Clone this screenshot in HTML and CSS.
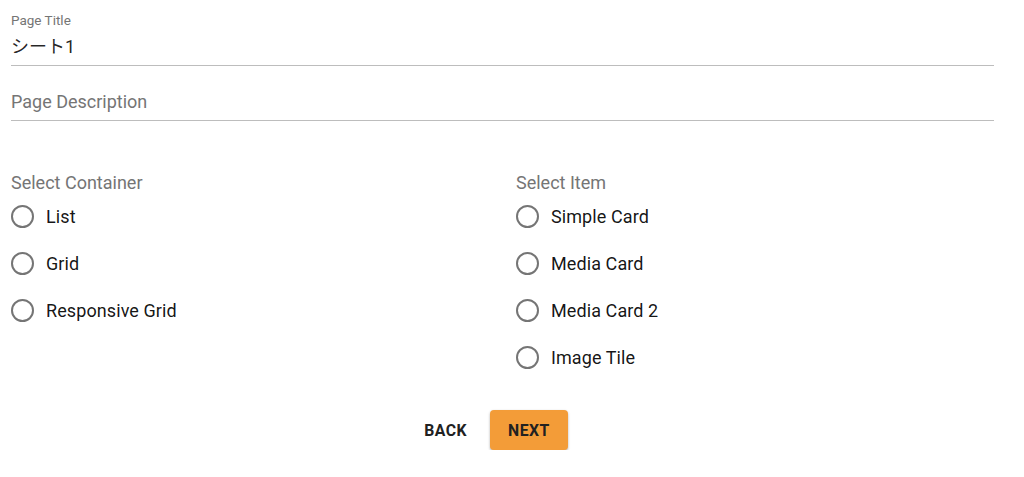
FILE: index.html
```html
<!DOCTYPE html>
<html lang="ja">
<head>
<meta charset="utf-8">
<title>Page</title>
<link rel="stylesheet" href="styles.css">
</head>
<body>
<div class="page">
  <div class="field">
    <div class="field-label">Page Title</div>
    <div class="field-input">シート1</div>
  </div>
  <div class="field field-empty">
    <div class="field-input placeholder">Page Description</div>
  </div>

  <div class="selects">
    <div class="group">
      <div class="group-label">Select Container</div>
      <div class="radio-row"><span class="radio"></span><span class="radio-text">List</span></div>
      <div class="radio-row"><span class="radio"></span><span class="radio-text">Grid</span></div>
      <div class="radio-row"><span class="radio"></span><span class="radio-text">Responsive Grid</span></div>
    </div>
    <div class="group">
      <div class="group-label">Select Item</div>
      <div class="radio-row"><span class="radio"></span><span class="radio-text">Simple Card</span></div>
      <div class="radio-row"><span class="radio"></span><span class="radio-text">Media Card</span></div>
      <div class="radio-row"><span class="radio"></span><span class="radio-text">Media Card 2</span></div>
      <div class="radio-row"><span class="radio"></span><span class="radio-text">Image Tile</span></div>
    </div>
  </div>

  <div class="actions">
    <button class="btn btn-text">BACK</button>
    <button class="btn btn-primary">NEXT</button>
  </div>
</div>
</body>
</html>
```

FILE: styles.css
```css
* { box-sizing: border-box; }
html, body {
  margin: 0;
  padding: 0;
  background: #fff;
}
body {
  font-family: Roboto, "Noto Sans CJK JP", "Liberation Sans", sans-serif;
  color: rgba(0, 0, 0, 0.87);
}
.page {
  padding: 12px 30px 0 11px;
}
.field {
  border-bottom: 1px solid #bdbdbd;
  padding-bottom: 8px;
}
.field-label {
  font-size: 13.5px;
  line-height: 16px;
  color: #757575;
}
.field-input {
  margin-top: 8px;
  font-size: 18px;
  line-height: 21px;
  color: rgba(0, 0, 0, 0.87);
}
.field-empty {
  margin-top: 25px;
}
.field-empty .field-input {
  margin-top: 0;
}
.placeholder {
  color: #757575;
}
.selects {
  margin-top: 52px;
  display: grid;
  grid-template-columns: 1fr 1fr;
  column-gap: 27px;
}
.group-label {
  font-size: 18px;
  line-height: 20px;
  color: #757575;
}
.radio-row {
  height: 47px;
  display: flex;
  align-items: center;
}
.radio {
  width: 23px;
  height: 23px;
  border: 2px solid #757575;
  border-radius: 50%;
  flex: none;
  margin-right: 12px;
}
.radio-text {
  font-size: 18px;
  line-height: 21px;
  color: rgba(0, 0, 0, 0.92);
  letter-spacing: 0.005em;
}
.actions {
  margin-top: 29px;
  display: flex;
  justify-content: center;
  gap: 5px;
  padding-right: 31px;
}
.btn {
  font-family: Roboto, "Liberation Sans", sans-serif;
  font-size: 15.75px;
  font-weight: 700;
  letter-spacing: 0.03em;
  height: 40px;
  padding: 0 18px;
  border: none;
  border-radius: 4px;
  color: #212121;
  background: transparent;
  cursor: pointer;
}
.btn-primary {
  background: #f39c38;
  box-shadow: 0 1px 3px rgba(0, 0, 0, 0.2), 0 2px 2px rgba(0, 0, 0, 0.12);
}
```
